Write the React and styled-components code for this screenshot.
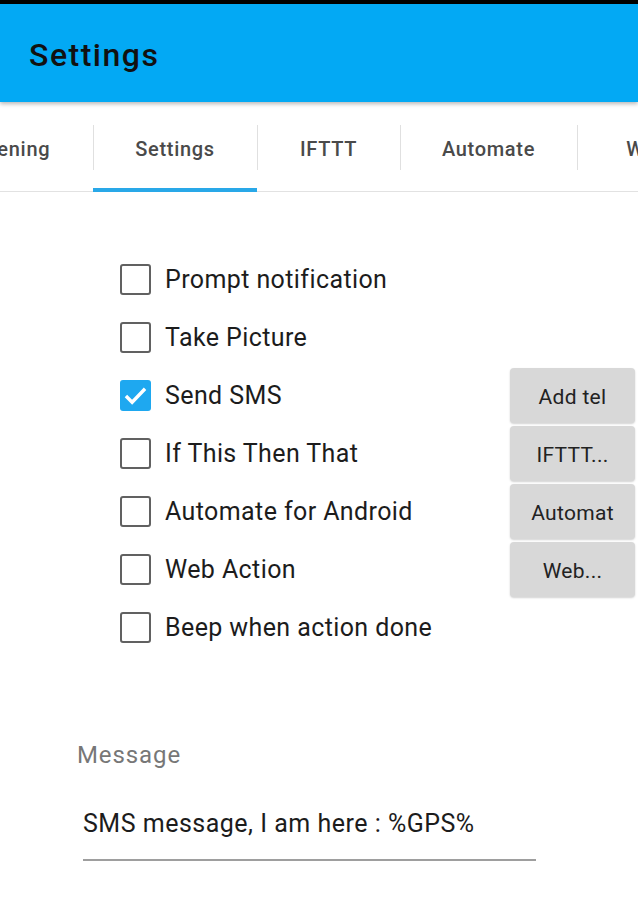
import React from "react";
import styled, { createGlobalStyle } from "styled-components";

const Global = createGlobalStyle`
  html, body { margin: 0; padding: 0; background: #fff; }
  body { font-family: Roboto, "Noto Sans", Arial, sans-serif; overflow: hidden; }
  * { box-sizing: border-box; }
`;

const Page = styled.div`
  width: 638px;
  height: 900px;
  background: #fff;
  overflow: hidden;
  border-top: 4px solid #000;
`;

const AppBar = styled.header`
  height: 98px;
  background: #03a9f4;
  display: flex;
  align-items: center;
  padding: 4px 0 0 29px;
  box-shadow: 0 2px 4px rgba(0, 0, 0, 0.28);
  position: relative;
  z-index: 1;
`;

const Title = styled.h1`
  margin: 0;
  font-size: 32px;
  font-weight: 500;
  color: #111;
  letter-spacing: 1.5px;
`;

const Tabs = styled.nav`
  height: 90px;
  display: flex;
  align-items: stretch;
  border-bottom: 1px solid #e2e2e2;
  margin-left: -71px;
`;

const Tab = styled.div`
  flex: 0 0 ${(p) => p.$w}px;
  display: flex;
  align-items: center;
  justify-content: center;
  padding: 4px ${(p) => (p.$first ? 10 : 0)}px 0 0;
  position: relative;
  font-size: 20px;
  font-weight: 500;
  letter-spacing: 0.7px;
  color: #4a4a4a;
  white-space: nowrap;
  &::before {
    content: "";
    display: ${(p) => (p.$first ? "none" : "block")};
    position: absolute;
    left: 0;
    top: 23px;
    bottom: 21px;
    width: 1px;
    background: #e0e0e0;
  }
  &::after {
    content: "";
    display: ${(p) => (p.$active ? "block" : "none")};
    position: absolute;
    left: 0;
    right: 0;
    bottom: -1px;
    height: 4px;
    background: #29a8e8;
  }
`;

const Content = styled.main`
  padding: 58px 3px 0 120px;
`;

const OptionGrid = styled.div`
  display: grid;
  grid-template-columns: 1fr 125px;
  grid-auto-rows: 58px;
`;

const Option = styled.label`
  grid-column: 1;
  display: flex;
  align-items: center;
  gap: 14px;
  font-size: 25px;
  letter-spacing: 0.4px;
  color: #1c1c1c;
  white-space: nowrap;
`;

const Box = styled.span`
  width: 31px;
  height: 31px;
  border-radius: 3px;
  border: ${(p) => (p.$checked ? "none" : "2.5px solid #616161")};
  background: ${(p) => (p.$checked ? "#1ea8f0" : "transparent")};
  display: flex;
  align-items: center;
  justify-content: center;
  flex: none;
`;

const ActionButton = styled.button`
  grid-column: 2;
  align-self: center;
  height: 55px;
  border: none;
  border-radius: 4px;
  background: #d8d8d8;
  box-shadow: 0 1px 2px rgba(0, 0, 0, 0.18);
  font-family: Roboto, "Noto Sans", Arial, sans-serif;
  font-size: 21px;
  letter-spacing: 0.3px;
  color: #222;
  padding: 4px 0 0;
`;

const MessageField = styled.section`
  padding: 85px 102px 0 77px;
`;

const FieldLabel = styled.div`
  font-size: 24px;
  letter-spacing: 0.9px;
  color: #777;
  line-height: 28px;
`;

const FieldInput = styled.div`
  margin: 40px 0 0 6px;
  font-size: 25px;
  letter-spacing: 0.5px;
  line-height: 30px;
  color: #1c1c1c;
  padding-bottom: 20px;
  border-bottom: 2px solid #9e9e9e;
  white-space: nowrap;
`;

const options = [
  { label: "Prompt notification" },
  { label: "Take Picture" },
  { label: "Send SMS", checked: true, button: "Add tel" },
  { label: "If This Then That", button: "IFTTT..." },
  { label: "Automate for Android", button: "Automat" },
  { label: "Web Action", button: "Web..." },
  { label: "Beep when action done" },
];

const tabs = [
  { label: "Listening", w: 164, first: true },
  { label: "Settings", w: 164, active: true },
  { label: "IFTTT", w: 143 },
  { label: "Automate", w: 177 },
  { label: "Web", w: 140 },
];

const Check = () => (
  <svg width="27" height="27" viewBox="0 0 24 24">
    <path d="M3.5 12.5l5.5 5.5L20.5 6" fill="none" stroke="#fff" strokeWidth="3" />
  </svg>
);

export default function App() {
  return (
    <Page>
      <Global />
      <AppBar>
        <Title>Settings</Title>
      </AppBar>
      <Tabs>
        {tabs.map((t) => (
          <Tab key={t.label} $w={t.w} $first={t.first} $active={t.active}>
            {t.label}
          </Tab>
        ))}
      </Tabs>
      <Content>
        <OptionGrid>
          {options.map((o) => (
            <React.Fragment key={o.label}>
              <Option>
                <Box $checked={o.checked}>{o.checked && <Check />}</Box>
                {o.label}
              </Option>
              {o.button ? <ActionButton>{o.button}</ActionButton> : <span />}
            </React.Fragment>
          ))}
        </OptionGrid>
      </Content>
      <MessageField>
        <FieldLabel>Message</FieldLabel>
        <FieldInput>SMS message, I am here : %GPS%</FieldInput>
      </MessageField>
    </Page>
  );
}
